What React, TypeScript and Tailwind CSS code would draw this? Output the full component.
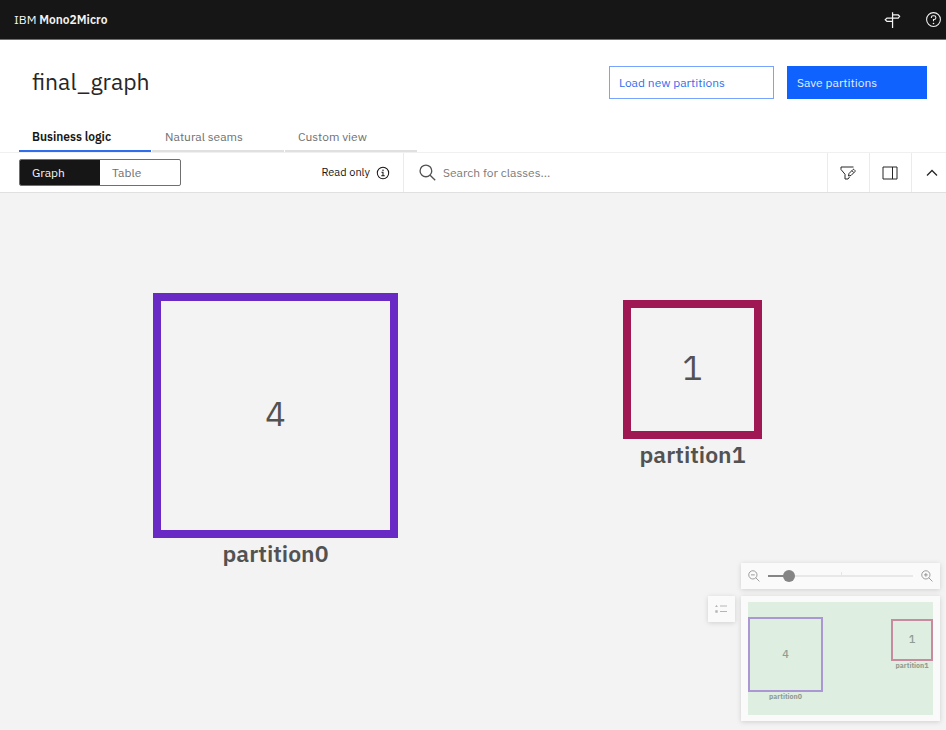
import { useState } from "react";
import type { ReactNode } from "react";

type IconProps = { className: string; children: ReactNode };

function Icon({ className, children }: IconProps) {
  return (
    <svg
      viewBox="0 0 32 32"
      fill="none"
      stroke="currentColor"
      strokeWidth="2"
      className={className}
      aria-hidden="true"
    >
      {children}
    </svg>
  );
}

function Header() {
  return (
    <header className="flex h-10 items-center justify-between border-b border-[#6f6f6f] bg-[#161616] pl-3.5 pr-1 text-[#f4f4f4]">
      <a href="#home" className="text-xs leading-4">
        IBM <span className="font-semibold">Mono2Micro</span>
      </a>
      <div className="flex items-center gap-6">
        <button type="button" aria-label="Tour">
          <Icon className="size-[18px]">
            <path
              d="M17 2v28M17 7h10l2.500 2.500-2.500 3H7l-3 3 3 3h10"
              strokeWidth="2.200"
            />
          </Icon>
        </button>
        <button type="button" aria-label="Help">
          <Icon className="size-[17px]">
            <circle cx="16" cy="16" r="13" />
            <path d="M12 13v-1a3 3 0 0 1 3-3h2a3.500 3.500 0 0 1 0 7h-1v3.500" />
            <circle cx="16" cy="23.500" r="1.500" fill="currentColor" stroke="none" />
          </Icon>
        </button>
      </div>
    </header>
  );
}

const tabs = ["Business logic", "Natural seams", "Custom view"];

function Tabs() {
  const [active, setActive] = useState(0);
  return (
    <div role="tablist" className="flex gap-px px-[19px]">
      {tabs.map((tab, i) => (
        <button
          key={tab}
          type="button"
          role="tab"
          aria-selected={i === active}
          onClick={() => setActive(i)}
          className={
            i === active
              ? "h-8 w-[132px] border-b-2 border-[#2f6fed] px-[13px] pt-1 text-left text-xs font-semibold text-[#161616]"
              : "h-8 w-[132px] border-b-2 border-[#e0e0e0] px-[13px] pt-1 text-left text-xs text-[#6f6f6f]"
          }
        >
          {tab}
        </button>
      ))}
    </div>
  );
}

function Toolbar() {
  return (
    <div className="flex h-[41px] border-y border-[#e0e0e0] border-t-[#f0f0f0] bg-white">
      <div className="flex w-[404px] items-center justify-between border-r border-[#ebebeb] pl-[19px] pr-[13px]">
        <div className="flex h-[27px] w-[162px] overflow-hidden rounded-xs border border-[#6f6f6f] text-xs">
          <button type="button" className="flex-1 bg-[#161616] pl-3 text-left text-[#f4f4f4]">
            Graph
          </button>
          <button type="button" className="flex-1 pl-3 text-left text-[#6f6f6f]">
            Table
          </button>
        </div>
        <div className="flex items-center gap-1.5 text-[11px] text-[#161616]">
          Read only
          <Icon className="size-3.5">
            <circle cx="16" cy="16" r="13" strokeWidth="2.300" />
            <path d="M12.500 14.500H16v8M12 22.500h8" strokeWidth="2.300" />
            <circle cx="16" cy="9.500" r="1.700" fill="currentColor" stroke="none" />
          </Icon>
        </div>
      </div>
      <label className="flex min-w-0 flex-1 items-center gap-[7px] pl-[15px] text-[#525252]">
        <Icon className="size-[17px]">
          <circle cx="13" cy="13" r="11" strokeWidth="2.500" />
          <path d="M21 21l9.500 9.500" strokeWidth="2.500" />
        </Icon>
        <input
          type="search"
          aria-label="Search for classes"
          placeholder="Search for classes..."
          className="min-w-0 flex-1 bg-transparent text-xs outline-none placeholder:text-[#7a7a7a]"
        />
      </label>
      <div className="flex text-[#262626]">
        <button
          type="button"
          aria-label="Filter"
          className="flex w-[42px] items-center justify-center border-l border-[#ebebeb] pr-0.5"
        >
          <Icon className="size-4">
            <path d="M27 4H2v5l8 9.500V28h6l3-4" />
            <path d="M17 22l1-5 8-8a1.500 1.500 0 0 1 2 0l2 2a1.500 1.500 0 0 1 0 2L22 21zM24 11.500l3.500 3.500" />
          </Icon>
        </button>
        <button
          type="button"
          aria-label="Toggle panel"
          className="flex w-[42px] items-center justify-center border-l border-[#ebebeb] pr-0.5"
        >
          <Icon className="size-4">
            <path d="M2 4h28v24H2zM21 4v24" />
          </Icon>
        </button>
        <button
          type="button"
          aria-label="Collapse"
          className="flex w-[35px] items-center border-l border-[#ebebeb] pl-3"
        >
          <Icon className="size-4">
            <path d="M6 21l10-10 10 10" strokeWidth="2.500" />
          </Icon>
        </button>
      </div>
    </div>
  );
}

type NodeProps = { count: number; name: string; place: string; box: string };

function PartitionNode({ count, name, place, box }: NodeProps) {
  return (
    <div className={`absolute flex flex-col items-center text-[#525252] ${place}`}>
      <div
        className={`flex items-center justify-center border-8 pb-1.5 text-[34px] leading-9 ${box}`}
      >
        {count}
      </div>
      <div className="text-[23px] leading-[30px] font-semibold">{name}</div>
    </div>
  );
}

function MiniNode({ count, name, place, box }: NodeProps) {
  return (
    <div className={`absolute flex flex-col items-center text-[#8f9c92] ${place}`}>
      <div
        className={`flex items-center justify-center border-2 pb-0.5 text-[11px] leading-3 font-medium ${box}`}
      >
        {count}
      </div>
      <div className="text-[7px] leading-[10px] font-bold">{name}</div>
    </div>
  );
}

function Overview() {
  const [zoom, setZoom] = useState(11);
  return (
    <div className="absolute right-1.5 bottom-[9px] flex items-start gap-1.5">
      <button
        type="button"
        aria-label="Legend"
        className="mt-[33px] flex h-[26px] w-[27px] items-center justify-center bg-[#fafafa] pr-0.5 text-[#b5b5b5] shadow-[0_1px_5px_rgba(0,0,0,0.15)]"
      >
        <svg viewBox="0 0 12 10" className="h-2.5 w-3" fill="currentColor" aria-hidden="true">
          <path d="M5 1.500h7v1H5zM5 7h7v1H5zM1.500 0.700l1.400 2.400H0.100zM0.300 6.300h2.400v2.400H0.300z" />
        </svg>
      </button>
      <div className="flex w-[199px] flex-col gap-[7px]">
        <div className="flex h-[26px] items-center gap-2 bg-[#fafafa] px-[7px] text-[#7d7d7d] shadow-[0_1px_5px_rgba(0,0,0,0.15)]">
          <button type="button" aria-label="Zoom out">
            <Icon className="size-3">
              <circle cx="13" cy="13" r="11" />
              <path d="M21 21l9.500 9.500M8 13h10" />
            </Icon>
          </button>
          <div className="relative flex min-w-0 flex-1 items-center">
            <span className="absolute top-0.5 left-1/2 h-1 w-px bg-[#e6e6e6]" />
            <input
              type="range"
              aria-label="Zoom level"
              value={zoom}
              onChange={(e) => setZoom(Number(e.target.value))}
              style={{
                backgroundImage: `linear-gradient(to right, #858585 ${zoom + 2}%, #e8e8e8 ${zoom + 2}%)`,
              }}
              className="h-3 w-full appearance-none bg-[length:100%_2px] bg-center bg-no-repeat [&::-webkit-slider-thumb]:size-3 [&::-webkit-slider-thumb]:appearance-none [&::-webkit-slider-thumb]:rounded-full [&::-webkit-slider-thumb]:bg-[#858585]"
            />
          </div>
          <button type="button" aria-label="Zoom in">
            <Icon className="size-3">
              <circle cx="13" cy="13" r="11" />
              <path d="M21 21l9.500 9.500M8 13h10M13 8v10" />
            </Icon>
          </button>
        </div>
        <div className="bg-[#fafafa] px-[7px] py-1.5 shadow-[0_1px_5px_rgba(0,0,0,0.15)]">
          <div className="relative h-[113px] bg-[#deeee0]">
            <MiniNode
              count={4}
              name="partition0"
              place="left-0 top-[15px]"
              box="size-[75px] border-[#ab97d3]"
            />
            <MiniNode
              count={1}
              name="partition1"
              place="right-0 top-[17px]"
              box="size-[42px] border-[#c88a9f]"
            />
          </div>
        </div>
      </div>
    </div>
  );
}

export default function App() {
  return (
    <div className="flex min-h-screen flex-col bg-white font-['IBM_Plex_Sans','Noto_Sans',sans-serif]">
      <Header />
      <div className="flex items-center justify-between pt-[26px] pr-[19px] pb-[21px] pl-8">
        <h1 className="pb-1 text-[23px] leading-7 text-[#262626]">final_graph</h1>
        <div className="flex gap-[13px] text-xs">
          <button
            type="button"
            className="h-[33px] w-[165px] border border-[#78a3ff] pl-[9px] text-left text-[#2f6fed]"
          >
            Load new partitions
          </button>
          <button
            type="button"
            className="h-[33px] w-[140px] bg-[#0f62fe] pl-2.5 text-left text-[#e5eeff]"
          >
            Save partitions
          </button>
        </div>
      </div>
      <Tabs />
      <Toolbar />
      <main className="relative min-h-[520px] flex-1 overflow-hidden bg-[#f3f3f3]">
        <PartitionNode
          count={4}
          name="partition0"
          place="left-[153px] top-[100px]"
          box="size-[245px] border-[#6929c4]"
        />
        <PartitionNode
          count={1}
          name="partition1"
          place="left-[623px] top-[107px]"
          box="size-[139px] border-[#9f1853]"
        />
        <Overview />
      </main>
    </div>
  );
}
